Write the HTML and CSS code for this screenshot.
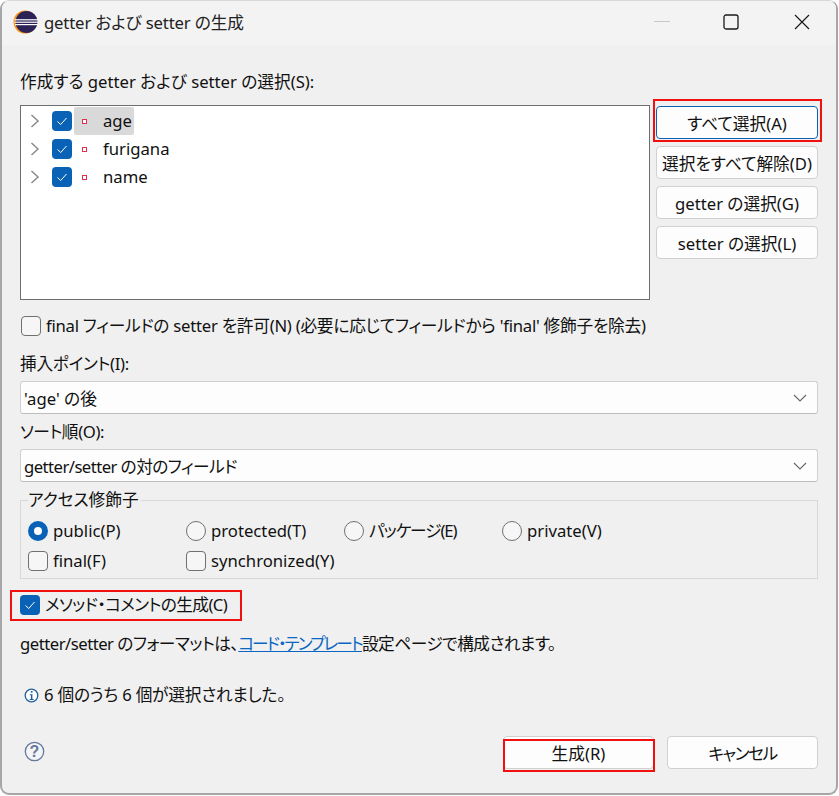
FILE: index.html
```html
<!DOCTYPE html>
<html lang="ja">
<head>
<meta charset="utf-8">
<title>getter および setter の生成</title>
<link rel="stylesheet" href="styles.css">
</head>
<body>
<div class="window">
  <header class="titlebar">
    <svg class="app-icon" width="25" height="24" viewBox="0 0 25 24">
      <circle cx="12" cy="12" r="11.5" fill="#f7941e"/>
      <circle cx="13.5" cy="12" r="11" fill="#2c2255"/>
      <rect x="1.5" y="9.2" width="24" height="1.2" fill="#fff"/>
      <rect x="1.5" y="11.6" width="24" height="1.2" fill="#fff"/>
      <rect x="2" y="14" width="23" height="1.2" fill="#fff"/>
    </svg>
    <span class="title">getter および setter の生成</span>
    <div class="winctl">
      <svg width="16" height="2" viewBox="0 0 16 2" class="min"><rect width="16" height="1" fill="#c8c8c8"/></svg>
      <svg width="16" height="16" viewBox="0 0 16 16" class="max"><rect x="1" y="1" width="14" height="14" rx="2" fill="none" stroke="#1a1a1a" stroke-width="1.3"/></svg>
      <svg width="16" height="16" viewBox="0 0 16 16" class="close"><path d="M1 1 L15 15 M15 1 L1 15" stroke="#1a1a1a" stroke-width="1.2" fill="none"/></svg>
    </div>
  </header>

  <main class="content">
    <div class="label top-label">作成する getter および setter の選択(S):</div>
    <div class="select-row">
      <div class="tree">
        <div class="tree-row">
          <svg class="chev" width="10" height="14" viewBox="0 0 10 14"><path d="M1.5 1 L8 7 L1.5 13" fill="none" stroke="#8c8c8c" stroke-width="1.5"/></svg>
          <span class="check"><svg width="20" height="20" viewBox="0 0 20 20"><path d="M5.5 10.5 L8.7 13.5 L14.5 7" fill="none" stroke="#fff" stroke-width="1"/></svg></span>
          <span class="tree-item selected"><span class="field-ico"></span><span class="tree-text">age</span></span>
        </div>
        <div class="tree-row">
          <svg class="chev" width="10" height="14" viewBox="0 0 10 14"><path d="M1.5 1 L8 7 L1.5 13" fill="none" stroke="#8c8c8c" stroke-width="1.5"/></svg>
          <span class="check"><svg width="20" height="20" viewBox="0 0 20 20"><path d="M5.5 10.5 L8.7 13.5 L14.5 7" fill="none" stroke="#fff" stroke-width="1"/></svg></span>
          <span class="tree-item"><span class="field-ico"></span><span class="tree-text">furigana</span></span>
        </div>
        <div class="tree-row">
          <svg class="chev" width="10" height="14" viewBox="0 0 10 14"><path d="M1.5 1 L8 7 L1.5 13" fill="none" stroke="#8c8c8c" stroke-width="1.5"/></svg>
          <span class="check"><svg width="20" height="20" viewBox="0 0 20 20"><path d="M5.5 10.5 L8.7 13.5 L14.5 7" fill="none" stroke="#fff" stroke-width="1"/></svg></span>
          <span class="tree-item"><span class="field-ico"></span><span class="tree-text">name</span></span>
        </div>
      </div>
      <div class="side-buttons">
        <div class="btn btn-focus">すべて選択(A)</div>
        <div class="btn">選択をすべて解除(D)</div>
        <div class="btn">getter の選択(G)</div>
        <div class="btn">setter の選択(L)</div>
      </div>
    </div>

    <div class="option final-opt">
      <span class="box"></span>
      <span class="tight-final">final フィールドの setter を許可(N) (必要に応じてフィールドから 'final' 修飾子を除去)</span>
    </div>

    <div class="label insert-label">挿入ポイント(I):</div>
    <div class="combo"><span>'age' の後</span><svg width="14" height="8" viewBox="0 0 14 8"><path d="M1 1 L7 7 L13 1" fill="none" stroke="#666" stroke-width="1.1"/></svg></div>
    <div class="label sort-label">ソート順(O):</div>
    <div class="combo"><span class="tight-sort">getter/setter の対のフィールド</span><svg width="14" height="8" viewBox="0 0 14 8"><path d="M1 1 L7 7 L13 1" fill="none" stroke="#666" stroke-width="1.1"/></svg></div>

    <fieldset class="group">
      <legend>アクセス修飾子</legend>
      <div class="group-grid">
        <div class="option"><span class="radio on"></span><span>public(P)</span></div>
        <div class="option"><span class="radio"></span><span>protected(T)</span></div>
        <div class="option"><span class="radio"></span><span class="tight-pkg">パッケージ(E)</span></div>
        <div class="option"><span class="radio"></span><span>private(V)</span></div>
        <div class="option"><span class="box"></span><span>final(F)</span></div>
        <div class="option"><span class="box"></span><span>synchronized(Y)</span></div>
      </div>
    </fieldset>

    <div class="option method-opt">
      <span class="check"><svg width="20" height="20" viewBox="0 0 20 20"><path d="M5.5 10.5 L8.7 13.5 L14.5 7" fill="none" stroke="#fff" stroke-width="1"/></svg></span>
      <span class="tight-method">メソッド・コメントの生成(C)</span>
    </div>

    <div class="label format-line"><span class="tight-format">getter/setter のフォーマットは、</span><a class="link">コード・テンプレート</a><span class="tight-format">設定ページで構成されます。</span></div>

    <div class="label status">
      <svg width="15" height="15" viewBox="0 0 15 15"><circle cx="7.5" cy="7.5" r="6.3" fill="#fff" stroke="#1f5f9e" stroke-width="1.3"/><rect x="6.8" y="3" width="1.7" height="1.7" fill="#1f5f9e"/><path d="M5.8 6.2 H8.4 V11 H9.6 V12 H5.6 V11 H6.9 V7.2 H5.8 Z" fill="#1f5f9e"/></svg>
      <span class="tight-status">6 個のうち 6 個が選択されました。</span>
    </div>

    <div class="footer">
      <svg class="help" width="21" height="21" viewBox="0 0 21 21"><circle cx="10.5" cy="10.5" r="9.2" fill="#f4f5f7" stroke="#66799a" stroke-width="1.3"/><text x="10.5" y="16" text-anchor="middle" class="help-q">?</text></svg>
      <div class="footer-buttons">
        <div class="btn btn-wide btn-gen">生成(R)</div>
        <div class="btn btn-wide btn-cancel">キャンセル</div>
      </div>
    </div>
  </main>

  <div class="mark mark-all"></div>
  <div class="mark mark-method"></div>
  <div class="mark mark-generate"></div>
</div>
</body>
</html>
```
FILE: styles.css
```css
* { box-sizing: border-box; }
html, body { margin: 0; padding: 0; background: #fff; }
body {
  width: 839px;
  height: 796px;
  overflow: hidden;
  font-family: "Noto Sans", "Noto Sans CJK JP", sans-serif;
  font-size: 16.7px;
  font-feature-settings: "palt";
  color: #111;
}
.window {
  position: relative;
  width: 838px;
  height: 795px;
  background: #f0f0f0;
  border: 2px solid #a6a6a6;
  border-top: 1px solid #d8d8d8;
  border-radius: 9px;
  overflow: hidden;
}
.titlebar {
  display: flex;
  align-items: center;
  height: 44px;
  padding: 0 0 3px 11px;
  background: #f3f3f3;
}
.app-icon { flex: none; }
.title { margin-left: 6px; color: #222; letter-spacing: -0.15px; }
.winctl {
  margin-left: auto;
  display: flex;
  align-items: center;
  padding-right: 26px;
}
.min { margin-right: 53px; }
.max { margin-right: 55px; }
.content {
  padding: 0 18px;
}
.label { line-height: 22px; white-space: nowrap; }
.top-label { margin-top: 26px; }
.select-row {
  display: flex;
  margin-top: 12px;
}
.tree {
  width: 630px;
  height: 195px;
  background: #fff;
  border: 1px solid #6e6e6e;
  padding-top: 1px;
}
.tree-row {
  display: flex;
  align-items: center;
  height: 28px;
  padding-left: 9px;
}
.chev { flex: none; }
.check {
  flex: none;
  width: 20px;
  height: 20px;
  border-radius: 4px;
  background: #0a62b7;
  display: block;
}
.check svg { display: block; }
.tree-row .check { margin-left: 12px; }
.tree-item {
  display: flex;
  align-items: center;
  height: 28px;
  margin-left: 2px;
  padding: 0 2px 0 8px;
  border-radius: 2px;
}
.tree-item.selected { background: #d9d9d9; }
.field-ico {
  flex: none;
  width: 5px;
  height: 5px;
  border: 1px solid #e0304f;
  background: #fff;
}
.tree-text {
  margin-left: 16px;
  line-height: 25px;
  height: 27px;
}
.side-buttons {
  margin-left: 6px;
  margin-top: 1px;
  display: flex;
  flex-direction: column;
  gap: 7px;
}
.btn {
  display: flex;
  align-items: center;
  justify-content: center;
  width: 162px;
  height: 33px;
  background: #fdfdfd;
  border: 1px solid #d0d0d0;
  border-radius: 4px;
  white-space: nowrap;
}
.btn-focus { border-color: #0a62b7; }
.option {
  display: flex;
  align-items: center;
  gap: 5px;
  white-space: nowrap;
  line-height: 22px;
}
.box {
  flex: none;
  width: 20px;
  height: 20px;
  background: #f6f6f6;
  border: 1px solid #707070;
  border-radius: 4px;
}
.radio {
  flex: none;
  width: 20px;
  height: 20px;
  background: #f6f6f6;
  border: 1px solid #707070;
  border-radius: 50%;
}
.radio.on {
  background: #fff;
  border: 6px solid #0a62b7;
}
.final-opt { margin-top: 15px; padding-left: 1px; }
.tight-final { letter-spacing: -0.25px; }
.insert-label { margin-top: 16px; letter-spacing: -0.3px; }
.combo {
  display: flex;
  align-items: center;
  justify-content: space-between;
  width: 798px;
  height: 33px;
  margin-top: 6px;
  padding: 0 10px 0 3px;
  background: #fdfdfd;
  border: 1px solid #d0d0d0;
  border-bottom-color: #bdbdbd;
  border-radius: 3px;
}
.tight-sort { letter-spacing: -0.55px; }
.sort-label { margin-top: 7px; letter-spacing: -0.4px; }
.group {
  width: 798px;
  height: 88px;
  margin: 9px 0 0;
  padding: 0 0 0 7px;
  border: 1px solid #d8d8d8;
}
.group legend {
  padding: 0 2px 0 0;
  line-height: 18px;
  height: 18px;
}
.group-grid {
  display: grid;
  grid-template-columns: 158px 158px 158px 158px;
  grid-auto-rows: 30px;
  margin-top: 7px;
}
.tight-pkg { letter-spacing: -1.1px; }
.method-opt { margin-top: 16px; height: 20px; }
.tight-method { letter-spacing: -0.6px; }
.format-line { margin-top: 18px; }
.tight-format { letter-spacing: -0.5px; }
.link { color: #0a66c2; text-decoration: underline; letter-spacing: -1.9px; }
.status {
  display: flex;
  align-items: center;
  gap: 5px;
  margin-top: 29px;
  padding-left: 4px;
}
.tight-status { letter-spacing: -0.2px; }
.footer {
  display: flex;
  align-items: center;
  justify-content: space-between;
  margin-top: 30px;
}
.help { margin-left: 4px; margin-top: -2px; }
.help-q { font-size: 16px; font-weight: 700; fill: #66799a; font-family: "Liberation Sans", sans-serif; }
.footer-buttons { display: flex; gap: 13px; }
.btn-wide { width: 151px; }
.btn-gen { padding-top: 1px; }
.btn-cancel { letter-spacing: -1.4px; padding-top: 1px; }
.mark {
  position: absolute;
  border: 2px solid #f01010;
  pointer-events: none;
}
.mark-all { left: 651px; top: 98px; width: 169px; height: 43px; }
.mark-method { left: 8px; top: 589px; width: 232px; height: 31px; }
.mark-generate { left: 501px; top: 738px; width: 152px; height: 33px; }
```
